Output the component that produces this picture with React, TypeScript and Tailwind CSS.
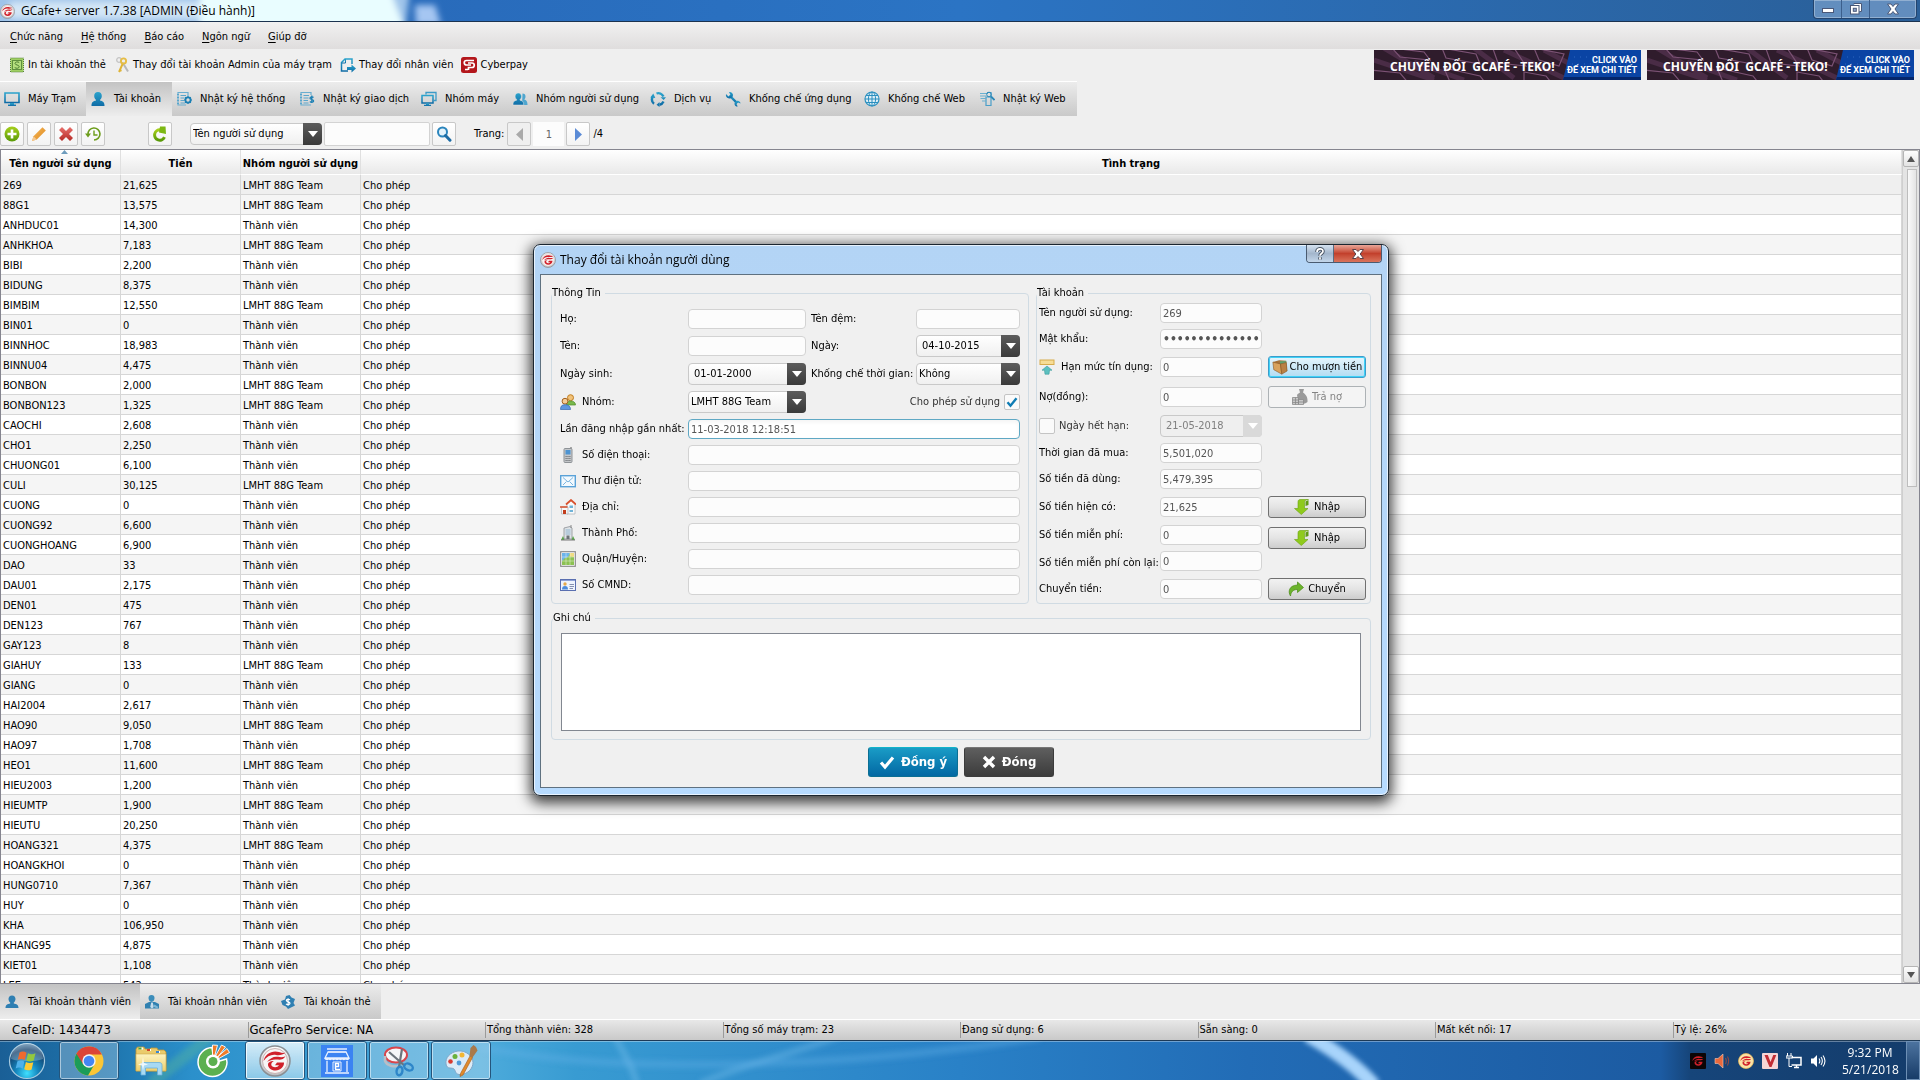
import React from "react";
import type { ReactNode } from "react";

type Row = [string, string, 0 | 1];

const rows: Row[] = [
  ["269", "21,625", 1],
  ["88G1", "13,575", 1],
  ["ANHDUC01", "14,300", 0],
  ["ANHKHOA", "7,183", 1],
  ["BIBI", "2,200", 0],
  ["BIDUNG", "8,375", 0],
  ["BIMBIM", "12,550", 1],
  ["BIN01", "0", 0],
  ["BINNHOC", "18,983", 0],
  ["BINNU04", "4,475", 0],
  ["BONBON", "2,000", 1],
  ["BONBON123", "1,325", 1],
  ["CAOCHI", "2,608", 0],
  ["CHO1", "2,250", 0],
  ["CHUONG01", "6,100", 0],
  ["CULI", "30,125", 1],
  ["CUONG", "0", 0],
  ["CUONG92", "6,600", 0],
  ["CUONGHOANG", "6,900", 0],
  ["DAO", "33", 0],
  ["DAU01", "2,175", 0],
  ["DEN01", "475", 0],
  ["DEN123", "767", 0],
  ["GAY123", "8", 0],
  ["GIAHUY", "133", 1],
  ["GIANG", "0", 0],
  ["HAI2004", "2,617", 0],
  ["HAO90", "9,050", 1],
  ["HAO97", "1,708", 0],
  ["HEO1", "11,600", 1],
  ["HIEU2003", "1,200", 0],
  ["HIEUMTP", "1,900", 1],
  ["HIEUTU", "20,250", 0],
  ["HOANG321", "4,375", 1],
  ["HOANGKHOI", "0", 0],
  ["HUNG0710", "7,367", 0],
  ["HUY", "0", 0],
  ["KHA", "106,950", 0],
  ["KHANG95", "4,875", 0],
  ["KIET01", "1,108", 0],
  ["LEE", "542", 0],
];

/* ---------- icons ---------- */

function Defs() {
  return (
    <svg width="0" height="0" className="absolute" aria-hidden="true">
      <defs>
        <linearGradient id="teal" x1="0" y1="0" x2="0" y2="1">
          <stop offset="0" stopColor="#2ba3cc" />
          <stop offset="1" stopColor="#0f6ca6" />
        </linearGradient>
        <linearGradient id="green" x1="0" y1="0" x2="0" y2="1">
          <stop offset="0" stopColor="#a6cf1c" />
          <stop offset="1" stopColor="#5a9a08" />
        </linearGradient>
        <linearGradient id="red" x1="0" y1="0" x2="0" y2="1">
          <stop offset="0" stopColor="#e8706c" />
          <stop offset="1" stopColor="#b52a26" />
        </linearGradient>
        <linearGradient id="orange" x1="0" y1="0" x2="1" y2="1">
          <stop offset="0" stopColor="#f5b65c" />
          <stop offset="1" stopColor="#de8a1c" />
        </linearGradient>
        <linearGradient id="paper" x1="0" y1="0" x2="0" y2="1">
          <stop offset="0" stopColor="#fdf3c0" />
          <stop offset="1" stopColor="#edcf6c" />
        </linearGradient>
        <linearGradient id="silver" x1="0" y1="0" x2="0" y2="1">
          <stop offset="0" stopColor="#ffffff" />
          <stop offset="1" stopColor="#b9bcc0" />
        </linearGradient>
        <radialGradient id="orb" cx="0.5" cy="0.85" r="0.9">
          <stop offset="0" stopColor="#3fe0ff" />
          <stop offset="0.35" stopColor="#1487bf" />
          <stop offset="0.75" stopColor="#123f6b" />
          <stop offset="1" stopColor="#6e9cc0" />
        </radialGradient>
      </defs>
    </svg>
  );
}

function Swirl({ color }: { color: string }) {
  return (
    <g fill={color}>
      <path d="M4.500 16C6 9 13 5 20 7c2 .6 4 1.200 6.500.8C24 10 20 10.500 17 10c-5-.8-9 1.500-12.500 6z" />
      <path d="M8 17c3-4 7-6 11-5.200 3 .6 5 .4 7.500-.5-1.500 3-5 3.700-8 3.300-4-.5-7.500.4-10.500 2.400z" />
      <path d="M9 19.500c0-2.200 3-3.700 6-3.500-3 1.300-3.500 4-1.500 5.500 2 1.400 5.500.8 6.500-1.200h-4l2-2.700h7c.3 4-3.500 8-8.500 8-4.500 0-7.500-3-7.500-6.100z" />
    </g>
  );
}

function GarenaLogo({ size, kind }: { size: number; kind: "ring" | "black" | "gold" }) {
  return (
    <svg width={size} height={size} viewBox="0 0 32 32" className="shrink-0">
      {kind === "black" ? (
        <rect width="32" height="32" rx="2" fill="#0c0506" />
      ) : (
        <circle
          cx="16"
          cy="16"
          r="15"
          fill={kind === "gold" ? "#fbe3a6" : "url(#silver)"}
          stroke={kind === "gold" ? "#e9b95a" : "#8b8e92"}
          strokeWidth="1.500"
        />
      )}
      {kind === "ring" && <circle cx="16" cy="16" r="12.500" fill="#f7f5f5" stroke="#c9b3b3" />}
      <Swirl color="#d0202a" />
    </svg>
  );
}

function Svg({ children, size = 16, box = 16 }: { children: ReactNode; size?: number; box?: number }) {
  return (
    <svg width={size} height={size} viewBox={`0 0 ${box} ${box}`} className="shrink-0" fill="none">
      {children}
    </svg>
  );
}

const T = "url(#teal)";

const MonitorIcon = () => (
  <Svg>
    <path d="M1 2h14v9.500H1z" stroke={T} strokeWidth="1.600" />
    <path d="M6 12h4v1.500h2V15H4v-1.500h2z" fill={T} />
  </Svg>
);
const PersonIcon = () => (
  <Svg>
    <path d="M8 1c2.400 0 3.800 1.700 3.800 3.900 0 1.700-.8 3.100-1.800 3.900v.8c2.600.6 4.500 1.400 4.500 5.400h-13c0-4 1.900-4.800 4.500-5.400v-.8C5 8 4.200 6.600 4.200 4.900 4.200 2.700 5.600 1 8 1z" fill={T} />
  </Svg>
);
const LogGearIcon = () => (
  <Svg>
    <path d="M12 5V1.500H2v12.500h8" stroke="#6aaed0" strokeWidth="1.200" />
    <path d="M1 3.500h2M1 6.500h2M1 9.500h2M1 12.500h2M4.500 4.500h5.500M4.500 7h4M4.500 9.500h3.500M4.500 12h4.500" stroke="#5aa6cc" />
    <circle cx="12" cy="9" r="2.600" stroke="#1a7fb4" strokeWidth="1.800" />
    <path d="M12 5v1.500M12 11.500V13M8 9h1.500M14.500 9H16M9.200 6.200l1 1M13.800 10.800l1 1M14.800 6.200l-1 1M10.200 10.800l-1 1" stroke="#1a7fb4" strokeWidth="1.200" />
  </Svg>
);
const LogMoneyIcon = () => (
  <Svg>
    <path d="M12 4V1.500H2v12.500h10" stroke="#6aaed0" strokeWidth="1.200" />
    <path d="M1 3.500h2M1 6.500h2M1 9.500h2M1 12.500h2M4.500 4.500h5.500M4.500 7h5M4.500 9.500h4.500M4.500 12h5" stroke="#5aa6cc" />
    <path d="M14.500 6.500c-1-1-3.500-.8-3.500.7 0 1.600 3.600 1 3.600 2.700 0 1.500-2.600 1.700-3.700.6M12.800 4.500v7.500" stroke="#1a7fb4" strokeWidth="1.300" />
  </Svg>
);
const ScreensIcon = () => (
  <Svg>
    <path d="M5 3.500V1.500h10v8h-2" stroke="#3c9bc8" strokeWidth="1.300" />
    <path d="M1 4.500h11v7.500H1z" stroke={T} strokeWidth="1.500" />
    <path d="M5 12.500h3v1.200h2V15H3v-1.300h2z" fill={T} />
  </Svg>
);
const PeopleIcon = () => (
  <Svg>
    <path d="M10.500 2.500c2 0 3 1.300 3 3 0 1.300-.5 2.300-1.300 3 2 .6 3.300 1.500 3.300 5.500H10z" fill="#4fa6cf" />
    <path d="M6.300 2c2 0 3.200 1.400 3.200 3.300 0 1.400-.7 2.600-1.500 3.200v.7c2.200.5 3.700 1.200 3.700 4.800H1c0-3.600 1.500-4.300 3.700-4.800v-.7C3.800 7.900 3.100 6.700 3.100 5.300 3.100 3.400 4.300 2 6.300 2z" fill={T} stroke="#e6e6e6" strokeWidth=".5" />
  </Svg>
);
const CycleIcon = () => (
  <Svg>
    <path d="M6.500 2.500C9 1.500 12 2.500 13.500 5.500M13.500 10.500c-.8 1.800-2.300 3-4 3.300M4 12.700C2 11.200 1.500 8.500 2.500 6" stroke={T} strokeWidth="2.400" />
    <path d="M10.500 6.300h5.500L13.700 9zM9.500 11v5l-3-2.300zM.3 6.500L3.300 2.500l2 4.400z" fill={T} />
  </Svg>
);
const WrenchIcon = () => (
  <Svg>
    <path d="M4.500 4.500l7.500 7.500" stroke={T} strokeWidth="2.400" />
    <path d="M1 3l2.500 2.500L5.500 4 4 1c2-.5 4 1 4 3 0 2.400-2.500 4-4.500 3.300C1.500 6.700.5 5 1 3z" fill={T} />
    <path d="M15.500 12.500L13 11.500l-1.500 1.500 1.200 2.600c-2 0-3.500-1.500-3.200-3.400.4-2 2.500-2.900 4-2.200 1.300.6 2 1.500 2 2.500z" fill={T} />
  </Svg>
);
const GlobeIcon = () => (
  <Svg>
    <circle cx="8" cy="8" r="7" stroke="#2a8fbf" strokeWidth="1.200" fill="#dff0f8" />
    <path d="M8 1v14M1 8h14M2 4.500h12M2 11.500h12" stroke="#2a8fbf" />
    <ellipse cx="8" cy="8" rx="3.600" ry="7" stroke="#2a8fbf" />
  </Svg>
);
const WebLogIcon = () => (
  <Svg>
    <path d="M1 2.500h8M1 5h6M1.500 7.500h5M3 10h3.500" stroke="#6ab0d0" strokeWidth="1.200" />
    <path d="M7 14.500V6h5v8.500zM8 1.500h4v4" stroke="#4a9ec8" strokeWidth="1.200" />
    <circle cx="10" cy="3.500" r="2.300" stroke="#2a88b8" />
    <path d="M12 5.500l3.500 3.500" stroke="#2a88b8" strokeWidth="1.800" />
  </Svg>
);

const PrintCardIcon = () => (
  <Svg>
    <rect x="1.500" y="1" width="13" height="14" fill="#9fcf63" stroke="#55803a" strokeDasharray="1 1" />
    <rect x="3.500" y="3.500" width="9" height="9" stroke="#5f8f40" fill="#b5df7f" />
    <path d="M10.200 5.500C9 4.500 6 4.700 6 6.500c0 1.700 4.200 1.200 4.200 3.200 0 1.800-3.200 2-4.500.8" stroke="#4a7a30" />
  </Svg>
);
const KeysIcon = () => (
  <Svg>
    <path d="M8.500 5.500L14 14.500" stroke="#b8b8b8" strokeWidth="2" />
    <path d="M9 6l-4 9M5.500 13l2 .8" stroke="#dfb436" strokeWidth="1.900" />
    <circle cx="5" cy="3" r="2.300" stroke="#c4c4c4" strokeWidth="1.300" />
    <circle cx="9.500" cy="4" r="2.600" stroke="#e6bd45" strokeWidth="1.900" />
  </Svg>
);
const SwitchUserIcon = () => (
  <Svg>
    <path d="M12 7V2H5L1.500 5.500V14H8" stroke={T} strokeWidth="1.500" />
    <path d="M5.500 2v4H1.500" stroke={T} />
    <path d="M7 10h4.500V7.500L16 11.500l-4.500 4V13H7z" fill={T} />
  </Svg>
);
const CyberpayIcon = () => (
  <Svg>
    <rect width="16" height="16" rx="2.500" fill="#b3161b" />
    <path d="M13 3.500H5.500a2 2 0 000 4.500h4.500M4 12.500h3M7 6h4a2.200 2.200 0 010 4.500H7.500V13" stroke="#fff" strokeWidth="1.700" />
  </Svg>
);

const AddIcon = () => (
  <Svg>
    <circle cx="8" cy="8" r="7.500" fill="url(#green)" />
    <path d="M8 3.500v9M3.500 8h9" stroke="#fff" strokeWidth="2.600" />
  </Svg>
);
const PencilIcon = () => (
  <Svg>
    <path d="M11.500 1.200l3.300 3.300-9 9-4.800 1.500 1.500-4.800z" fill="url(#orange)" />
    <path d="M1 15l1.500-4.800 3.300 3.300z" fill="#f3c892" />
  </Svg>
);
const DeleteIcon = () => (
  <Svg>
    <path d="M4 1l4 4 4-4 3 3-4 4 4 4-3 3-4-4-4 4-3-3 4-4-4-4z" fill="url(#red)" />
  </Svg>
);
const HistoryIcon = () => (
  <Svg>
    <path d="M3 8.500A6 6 0 119 14" stroke="#6d9d1c" strokeWidth="1.600" />
    <path d="M0 7.500h6l-3 4z" fill="#6d9d1c" />
    <path d="M9 4.500V9h3.500" stroke="#6d9d1c" strokeWidth="1.400" />
  </Svg>
);
const RefreshIcon = () => (
  <Svg>
    <path d="M12.500 11.200A5.200 5.200 0 118.500 3.800" stroke="url(#green)" strokeWidth="3" />
    <path d="M8 .5h5.500L14 8 7 6.500z" fill="#7db814" />
  </Svg>
);
const SearchIcon = () => (
  <Svg>
    <circle cx="6.500" cy="6" r="4.500" stroke="#2b85bd" strokeWidth="2" fill="#e4f3fb" />
    <path d="M9.500 9.500l4.500 4.700" stroke="#1d6ca5" strokeWidth="3" strokeLinecap="round" />
  </Svg>
);

const CardMemberIcon = () => (
  <Svg>
    <path d="M8 1.500c2.200 0 3.500 1.500 3.500 3.600 0 1.600-.8 2.800-1.700 3.500v.8c2.700.6 4.700 1.200 4.700 4.600H1.500c0-3.400 2-4 4.700-4.600v-.8C5.300 7.900 4.500 6.700 4.500 5.100 4.500 3 5.800 1.500 8 1.500z" fill="#2f7fb2" />
  </Svg>
);
const StaffIcon = () => (
  <Svg>
    <path d="M7.500 1c2 0 3 1.300 3 3S9.500 8 7.500 8s-3-2.300-3-4 1-3 3-3z" fill="#3c8dba" />
    <path d="M1 14.500V10l4-2h6l4 2v4.500z" fill="#3080b0" />
    <path d="M7.200 8.500h1.600l1 4.500-1.800 1.500L6.200 13z" fill="#c6dceb" />
    <path d="M10.500 10.500l4 2.500-1.500 1.500-4-2z" fill="#7db5d4" />
  </Svg>
);
const MoneyTagIcon = () => (
  <Svg>
    <path d="M9.500 1l2 2.500L15 5l-1.500 4L15 11.500 8 15l-2-2.500L2.500 11 1 7l4-1.500L6 2z" fill="#2f7fb2" />
    <path d="M10 5.800C9 5 6.300 5 6.300 6.600c0 1.600 3.700 1 3.700 2.700 0 1.600-2.900 1.700-4 .6M8.100 4.200v7.600" stroke="#fff" strokeWidth="1.200" />
  </Svg>
);

const GroupIcon = () => (
  <Svg>
    <circle cx="10.500" cy="3.700" r="3" fill="#f1c27a" stroke="#c07d20" />
    <path d="M6.500 11c0-3 1.500-4 4-4s5 1 5 4z" fill="#79b84c" stroke="#4f8c2c" strokeWidth=".7" />
    <circle cx="5" cy="7.200" r="2.900" fill="#f4cd97" stroke="#a5601c" />
    <path d="M.5 15.500c0-3.500 1.500-4.800 4.500-4.800s5.500 1.300 5.500 4.800z" fill="#5e97e0" stroke="#3567ad" strokeWidth=".7" />
  </Svg>
);
const PhoneIcon = () => (
  <Svg>
    <path d="M11 0v2" stroke="#777" strokeWidth="1.200" />
    <rect x="4" y="1.500" width="8" height="14" rx="1" fill="#c3c6c9" stroke="#8e9397" />
    <rect x="5.500" y="3" width="5" height="4.500" fill="#4d94d2" />
    <path d="M5.500 9.500h5M5.500 11.500h5M5.500 13.500h5" stroke="#6e7276" strokeDasharray="1.200 .7" />
  </Svg>
);
const MailIcon = () => (
  <Svg>
    <rect x=".7" y="2.700" width="14.600" height="11" fill="#f2f9fe" stroke="#5aa2d8" strokeWidth="1.400" />
    <path d="M3 4.500l5 4.500 5-4.500M3 12l3.500-3.500M13 12L9.500 8.500" stroke="#7cb5df" />
  </Svg>
);
const HouseIcon = () => (
  <Svg>
    <path d="M7 5l4-3.500L15 5v10H7z" fill="#fafafa" stroke="#a9b0b5" strokeWidth=".7" />
    <path d="M1.500 8H8v7H1.500z" fill="#f6f6f6" stroke="#a9b0b5" strokeWidth=".7" />
    <path d="M6 5.500L11 1l5 4.500M0 8h7.500" stroke="#d9502c" strokeWidth="1.700" />
    <rect x="3" y="11" width="3" height="4" fill="#c23d1c" />
    <path d="M9.500 6.500h3.500v2.500H9.500zM9.500 11h3.500v2H9.500z" fill="#6fb3d8" />
  </Svg>
);
const CityIcon = () => (
  <Svg>
    <path d="M4 14V3l6-1.500L12 3v11z" fill="#dfe3e6" stroke="#8c9196" strokeWidth=".8" />
    <path d="M11 0v3" stroke="#888" />
    <path d="M5.500 5h5M5.500 7h5M5.500 9h5" stroke="#8fb5d0" />
    <path d="M6.500 14v-3.500h3V14z" fill="#6d7378" />
    <path d="M1 15l2-4 1.500 4zM11.500 15l1.500-4 2 4z" fill="#5aa54a" />
    <path d="M1 15h14" stroke="#777" />
  </Svg>
);
const MapIcon = () => (
  <Svg>
    <rect x=".7" y=".7" width="14.600" height="14.600" fill="#fff" stroke="#8c8c8c" strokeWidth="1.200" />
    <rect x="2" y="2" width="12" height="12" fill="#8cc152" />
    <path d="M2 2h8l-2 4-3 1-3 3z" fill="#6cb4ea" />
    <path d="M10 2h4v4l-4-.5z" fill="#f0dc82" />
    <path d="M2 6h12M2 10h12M6 2v12M10 2v12" stroke="#fff" strokeWidth=".4" />
  </Svg>
);
const IdCardIcon = () => (
  <Svg>
    <rect x=".5" y="2.500" width="15" height="11" fill="#eef4fd" stroke="#5a6fb0" />
    <path d="M1 3.500h14" stroke="#8fa2d6" />
    <circle cx="5" cy="7" r="1.700" fill="#e4a94c" />
    <path d="M2 12.500c0-2.500 1-3.500 3-3.500s3 1 3 3.500z" fill="#4b8bdc" />
    <path d="M9.500 7.500H14M9.500 9.500H14M9.500 11.500H13" stroke="#8590b0" />
  </Svg>
);
const CreditIcon = () => (
  <Svg>
    <rect x="1" y="1" width="14" height="4.500" fill="#f7dd96" stroke="#d6ac4c" />
    <path d="M8 7l5 4.200h-2.500l-.5 4H6l-.5-4H3z" fill="#5cc0c0" stroke="#3a9c9c" strokeWidth=".6" />
  </Svg>
);
const WalletIcon = () => (
  <Svg box={18}>
    <path d="M1 3.500L8 1.500l8 .5 1 11-6 2.500z" fill="#a8743a" />
    <path d="M9 2.500h7v5H9z" fill="#5aa574" />
    <path d="M1 3.500l8.500 2 1.500 11.500-9-5z" fill="#d9a25c" stroke="#8a5a28" strokeWidth=".7" />
    <path d="M9.500 5.500L16 4l1 9.500-6 3.500z" fill="#b98145" stroke="#8a5a28" strokeWidth=".7" />
  </Svg>
);
const DebtIcon = () => (
  <Svg>
    <path d="M7 0h5l-1 3.500c3 2 5 5 4.500 9.500-2 2-6 2-9 1.500L5 6c1-1.500 2-2 3-2.500z" fill="#9a9a9a" />
    <path d="M.5 8.500h6v7h-6zM6.500 10.500h5v5h-5z" fill="#c9c9c9" stroke="#8a8a8a" strokeWidth=".8" />
    <path d="M.5 11h6M.5 13.500h6M6.500 13h5M3.500 8.500v7" stroke="#8a8a8a" strokeWidth=".8" />
  </Svg>
);
const DownArrowIcon = () => (
  <Svg>
    <path d="M14.500 1v5l-3 1V2.500z" fill="#5f9a12" />
    <path d="M4 3c0-2 1-2.500 3-2.500h7.500c-2.500.3-4 1-4 3v6H14L7.300 15.500.5 9.500H4z" fill="#8fca1c" stroke="#6aa30e" strokeWidth=".6" />
  </Svg>
);
const TransferIcon = () => (
  <Svg>
    <path d="M9.500 1L15.500 6.500l-6 5V8.500C5 8.500 3 11 2.500 15 0 11 .5 4.500 9.500 4z" fill="#6cb42c" stroke="#478a14" strokeWidth=".7" />
  </Svg>
);

/* ---------- controls ---------- */

function Caret({ className }: { className: string }) {
  return (
    <span className={`pointer-events-none absolute inset-y-0 right-0 flex w-[19px] items-center justify-center rounded-r-sm ${className}`}>
      <svg width="10" height="6" viewBox="0 0 10 6" fill="#fff">
        <path d="M0 0h10L5 6z" />
      </svg>
    </span>
  );
}

function Select({ id, label, value, indent, disabled }: { id: string; label?: string; value: string; indent?: boolean; disabled?: boolean }) {
  return (
    <span className="relative block h-[22px] w-full">
      <select
        id={id}
        aria-label={label}
        disabled={disabled}
        defaultValue={value}
        className={`block h-full w-full appearance-none rounded-sm border border-[#c9c9c9] pr-5 ${indent ? "pl-[5px]" : "pl-0.5"} ${disabled ? "bg-[#efefef] text-[#808080] opacity-100" : "bg-linear-to-b from-white to-[#f0f0f0] text-black"}`}
      >
        <option>{value}</option>
      </select>
      <Caret className={disabled ? "bg-[#d9d9d9]" : "bg-linear-to-b from-[#5c5c5c] to-[#3a3a3a]"} />
    </span>
  );
}

function Field({ id, value = "", focus, type = "text" }: { id: string; value?: string; focus?: boolean; type?: string }) {
  return (
    <input
      id={id}
      type={type}
      defaultValue={value}
      className={`block h-5 w-full min-w-0 rounded-sm border px-0.5 text-[#555] outline-none ${type === "password" ? "text-xs font-bold" : ""} ${focus ? "border-[#5fa8c4] bg-white inset-shadow-sm" : "border-[#d3d3d3] bg-[#fcfcfc]"}`}
    />
  );
}

function Label({ htmlFor, icon, children, className = "" }: { htmlFor: string; icon?: ReactNode; children: ReactNode; className?: string }) {
  return (
    <label htmlFor={htmlFor} className={`flex items-center gap-1.5 whitespace-nowrap ${className}`}>
      {icon}
      {children}
    </label>
  );
}

function Check({ id, checked, label }: { id: string; checked?: boolean; label?: string }) {
  return (
    <span className="relative block size-4">
      <input
        id={id}
        type="checkbox"
        aria-label={label}
        defaultChecked={checked}
        className="peer block size-4 appearance-none rounded-xs border border-[#c4c4c4] bg-[#fafafa]"
      />
      <svg className="pointer-events-none absolute inset-0 hidden peer-checked:block" width="16" height="16" viewBox="0 0 16 16" fill="none">
        <path d="M3.500 8.200l3 3.500 6-7.500" stroke="#0f7cb4" strokeWidth="2.400" />
      </svg>
    </span>
  );
}

function PushButton({ icon, children, kind = "plain" }: { icon: ReactNode; children: ReactNode; kind?: "plain" | "hot" | "off" }) {
  const look = {
    plain: "gap-1 border-[#707070] bg-linear-to-b from-[#f2f2f2] via-[#e4e4e4] to-[#cdcdcd]",
    hot: "gap-0.5 border-[#3c9ccb] bg-linear-to-b from-[#e6f5fc] to-[#b2dcf2] inset-ring-1 inset-ring-[#3fd2f7]",
    off: "gap-1 border-[#adb2b5] bg-[#f4f4f4] text-[#838383]",
  }[kind];
  return (
    <button type="button" disabled={kind === "off"} className={`flex h-[22px] w-full items-center justify-center rounded-[3px] border whitespace-nowrap ${look}`}>
      {icon}
      {children}
    </button>
  );
}

function Group({ title, className, legend = "-ml-2", children }: { title: string; className: string; legend?: string; children: ReactNode }) {
  return (
    <fieldset className={`min-w-0 rounded-[4px] border border-[#d0dbe3] ${className}`}>
      {children}
      <legend className={`pr-1 leading-3.5 ${legend}`}>{title}</legend>
    </fieldset>
  );
}

function IconButton({ label, className = "", children }: { label: string; className?: string; children: ReactNode }) {
  return (
    <button type="button" aria-label={label} className={`flex size-6 shrink-0 items-center justify-center rounded-xs border border-[#c8c8c8] bg-linear-to-b from-white to-[#f3f3f3] ${className}`}>
      {children}
    </button>
  );
}

/* ---------- main window ---------- */

function TitleBar() {
  return (
    <header className="relative flex h-[22px] shrink-0 items-start justify-between overflow-hidden border-b border-[#1b3350] bg-linear-to-r from-[#2764b4] via-[#2b74c4] to-[#2a5f98] font-['Open_Sans',sans-serif]">
      <svg className="absolute inset-0" width="460" height="21" viewBox="0 0 460 21" aria-hidden="true">
        <defs>
          <filter id="soft" x="-10%" y="-50%" width="120%" height="200%">
            <feGaussianBlur stdDeviation="3" />
          </filter>
        </defs>
        <g filter="url(#soft)">
          <path d="M-10-10h420l-5 40H-10z" fill="#9fc4ea" />
          <path d="M10 2h200v16H10z" fill="#d3e6f6" />
          <path d="M200-10h190l15 40H200z" fill="#e9fdff" />
          <path d="M415 5h20l6 20h-25z" fill="#a5c6f2" />
        </g>
      </svg>
      <h1 className="relative flex items-center gap-1.5 pt-0.5 text-xs leading-[18px]">
        <GarenaLogo size={15} kind="ring" />
        GCafe+ server 1.7.38 [ADMIN (Điều hành)]
      </h1>
      <div className="relative mr-[3px] flex h-[19px] rounded-b-[4px] border border-t-0 border-[#23446e] bg-[#7ba1cd]/70 inset-ring inset-ring-white/30">
        <button type="button" aria-label="Minimize" className="flex w-7 items-center justify-center border-r border-[#3c5f8c]">
          <Svg size={14} box={14}>
            <rect x="1.500" y="6.500" width="11" height="4" fill="#fff" stroke="#4a5878" />
          </Svg>
        </button>
        <button type="button" aria-label="Restore" className="flex w-7 items-center justify-center border-r border-[#3c5f8c]">
          <Svg size={14} box={14}>
            <path d="M4.500 1.500h8v8h-2" fill="#fff" stroke="#4a5878" />
            <rect x="1.500" y="3.500" width="8.500" height="8.500" fill="#fff" stroke="#4a5878" />
            <rect x="4.300" y="6.300" width="3" height="3" fill="#8fa6cc" stroke="#4a5878" />
          </Svg>
        </button>
        <button type="button" aria-label="Close" className="flex w-[46px] items-center justify-center">
          <Svg size={14} box={14}>
            <path d="M1.500 2h3.500l2 2.500L9 2h3.500L9 7l3.500 5H9L7 9.500 5 12H1.500L5 7z" fill="#fff" stroke="#4a5878" />
          </Svg>
        </button>
      </div>
    </header>
  );
}

function MenuBar() {
  const items = ["Chức năng", "Hệ thống", "Báo cáo", "Ngôn ngữ", "Giúp đỡ"];
  return (
    <nav className="flex h-[27px] shrink-0 items-center gap-[18px] bg-linear-to-b from-[#f1f1f1] to-[#dfdddd] px-2.5 pt-0.5">
      {items.map((t) => (
        <button type="button" key={t}>
          <span className="underline underline-offset-2">{t[0]}</span>
          {t.slice(1)}
        </button>
      ))}
    </nav>
  );
}

function Banner() {
  return (
    <a href="#teko" className="relative flex h-[30px] w-[267px] items-center justify-between overflow-hidden bg-[#2f1c2c] pr-1 pl-4 font-bold text-white">
      <svg className="absolute inset-0" width="267" height="30" viewBox="0 0 267 30" aria-hidden="true" fill="none">
        <g stroke="#4a2c46" strokeWidth="5">
          <path d="M0 10l60 20M40 12l50 18M100-2l40 30M10-2L60 28M130 0l60 28M170 0l30 16" />
        </g>
        <g stroke="#7b5274" strokeWidth="1.200">
          <path d="M18-2l32 4 6 8-30-3zM68-2l34 6 4 10-34-6zM118-4l22 2 12 18-28-3zM70 18l36 8 8 10-38-4zM-4 20l30 3 10 12-36-2zM150 22l22 4 8 10-30-4zM160-2l30 6-5 12-20-6z" />
        </g>
        <path d="M196 0h71v30h-78z" fill="#0a44a4" />
        <path d="M190 27h77v3h-78z" fill="#04266b" />
        <g stroke="#2d66c0" strokeDasharray="1 5">
          <path d="M200 7h64M198 14h66M195 21h70" />
        </g>
      </svg>
      <span className="relative pt-1 text-xs leading-4 whitespace-pre font-['Noto_Sans',sans-serif]">CHUYỂN ĐỔI  GCAFÉ - TEKO!</span>
      <span className="relative text-right text-[9px] leading-2.5 whitespace-nowrap font-['Roboto',sans-serif]">
        CLICK VÀO
        <br />
        ĐỂ XEM CHI TIẾT
      </span>
    </a>
  );
}

function ToolBar() {
  return (
    <div className="flex h-8 shrink-0 items-start justify-between pr-1.5 pl-[9px]">
      <div className="flex h-full items-center gap-2 whitespace-nowrap">
        <button type="button" className="flex items-center gap-[3px]"><PrintCardIcon />In tài khoản thẻ</button>
        <button type="button" className="flex items-center gap-[3px]"><KeysIcon />Thay đổi tài khoản Admin của máy trạm</button>
        <button type="button" className="flex items-center gap-[3px]"><SwitchUserIcon />Thay đổi nhân viên</button>
        <button type="button" className="flex items-center gap-[3px]"><CyberpayIcon />Cyberpay</button>
      </div>
      <div className="flex gap-1.5 pt-px">
        <Banner />
        <Banner />
      </div>
    </div>
  );
}

const tabs: [string, ReactNode, string][] = [
  ["Máy Trạm", <MonitorIcon />, "w-[86px]"],
  ["Tài khoản", <PersonIcon />, "w-[86px]"],
  ["Nhật ký hệ thống", <LogGearIcon />, "w-[123px]"],
  ["Nhật ký giao dịch", <LogMoneyIcon />, "w-[122px]"],
  ["Nhóm máy", <ScreensIcon />, "w-[91px]"],
  ["Nhóm người sử dụng", <PeopleIcon />, "w-[138px]"],
  ["Dịch vụ", <CycleIcon />, "w-[75px]"],
  ["Khống chế ứng dụng", <WrenchIcon />, "w-[139px]"],
  ["Khống chế Web", <GlobeIcon />, "w-[115px]"],
  ["Nhật ký Web", <WebLogIcon />, "w-[102px]"],
];

const tabIdle = "bg-linear-to-b from-[#ececec] to-[#c9c9c9]";
const tabOn = "bg-linear-to-b from-[#c3c3c3] to-[#ededed]";

function TabBar() {
  return (
    <nav className="flex h-[35px] shrink-0">
      {tabs.map(([t, icon, w], i) => (
        <button type="button" key={t} className={`flex items-center gap-2 border-t border-white pl-1 whitespace-nowrap ${w} ${i === 1 ? tabOn : tabIdle}`}>
          {icon}
          {t}
        </button>
      ))}
    </nav>
  );
}

function FilterBar() {
  return (
    <div className="flex h-[33px] shrink-0 items-center pt-[3px]">
      <div className="flex gap-[3px]">
        <IconButton label="Thêm"><AddIcon /></IconButton>
        <IconButton label="Sửa"><PencilIcon /></IconButton>
        <IconButton label="Xóa"><DeleteIcon /></IconButton>
        <IconButton label="Lịch sử"><HistoryIcon /></IconButton>
      </div>
      <IconButton label="Làm mới" className="ml-[43px]"><RefreshIcon /></IconButton>
      <div className="ml-[18px] w-[132px]">
        <Select id="filter-by" label="Lọc theo" value="Tên người sử dụng" />
      </div>
      <input aria-label="Tìm kiếm" className="ml-0.5 h-6 w-[106px] rounded-xs border border-[#d3d3d3] bg-[#fcfcfc] px-1" />
      <IconButton label="Tìm" className="ml-0.5"><SearchIcon /></IconButton>
      <label htmlFor="page" className="ml-[18px]">Trang:</label>
      <IconButton label="Trang trước" className="ml-[3px] bg-none">
        <svg width="7" height="13" viewBox="0 0 7 13" fill="#a9a9a9"><path d="M7 0v13L0 6.500z" /></svg>
      </IconButton>
      <input id="page" defaultValue="1" className="ml-0.5 h-6 w-[31px] bg-[#fcfcfc] text-center text-[#666]" />
      <IconButton label="Trang sau" className="ml-0.5">
        <svg width="7" height="13" viewBox="0 0 7 13" fill="#5b8bd6"><path d="M0 0v13L7 6.500z" /></svg>
      </IconButton>
      <span className="ml-[3px]">/4</span>
    </div>
  );
}

function ScrollBar() {
  return (
    <div className="flex w-[17px] shrink-0 flex-col border-l border-[#cfcfcf] bg-[#e4e4e4]">
      <button type="button" aria-label="Lên" className="flex h-[17px] items-center justify-center rounded-xs border border-[#b5b5b5] bg-linear-to-b from-[#fdfdfd] to-[#e3e3e3]">
        <svg width="8" height="6" viewBox="0 0 8 6" fill="#555"><path d="M4 0l4 6H0z" /></svg>
      </button>
      <div className="mt-0.5 mr-0.5 ml-1 h-[318px] border border-[#bdbdbd] bg-linear-to-r from-[#fafafa] to-[#e4e4e4]" />
      <div className="flex-1" />
      <button type="button" aria-label="Xuống" className="flex h-[17px] items-center justify-center rounded-xs border border-[#b5b5b5] bg-linear-to-b from-[#fdfdfd] to-[#e3e3e3]">
        <svg width="8" height="6" viewBox="0 0 8 6" fill="#555"><path d="M0 0h8L4 6z" /></svg>
      </button>
    </div>
  );
}

function AccountTable() {
  const th = "relative h-[25px] border-r border-b border-[#e0e0e0] border-b-white bg-linear-to-b from-white to-[#e9e9e9] px-0 pt-1 pb-0 text-center font-bold whitespace-nowrap";
  const td = "h-5 border-r border-b border-[#d6d6d6] px-0.5 pt-0.5 pb-0 whitespace-nowrap";
  return (
    <main className="flex min-h-0 flex-1 overflow-hidden border border-[#85858f] bg-white">
      <div className="min-w-0 flex-1 overflow-hidden">
        <table className="w-full table-fixed border-separate border-spacing-0 leading-3.5">
          <colgroup>
            <col className="w-[120px]" />
            <col className="w-[120px]" />
            <col className="w-[120px]" />
            <col />
          </colgroup>
          <thead>
            <tr>
              <th className={th}>
                <svg className="absolute top-0 left-1/2" width="7" height="4" viewBox="0 0 7 4" fill="#6f9dbd"><path d="M3.500 0L7 4H0z" /></svg>
                Tên người sử dụng
              </th>
              <th className={th}>Tiền</th>
              <th className={th}>Nhóm người sử dụng</th>
              <th className={th}>Tình trạng</th>
            </tr>
          </thead>
          <tbody>
            {rows.map(([name, money, g], i) => (
              <tr key={name} className={i === 0 ? "bg-[#efefef]" : i % 2 ? "bg-[#f5f5f5]" : "bg-white"}>
                <td className={td}>{name}</td>
                <td className={td}>{money}</td>
                <td className={td}>{g ? "LMHT 88G Team" : "Thành viên"}</td>
                <td className={td}>Cho phép</td>
              </tr>
            ))}
          </tbody>
        </table>
      </div>
      <ScrollBar />
    </main>
  );
}

function BottomTabs() {
  return (
    <nav className="flex h-[35px] shrink-0">
      <button type="button" className={`flex w-[140px] items-center gap-2 pl-1 whitespace-nowrap ${tabOn}`}><CardMemberIcon />Tài khoản thành viên</button>
      <button type="button" className={`flex w-[136px] items-center gap-2 pl-1 whitespace-nowrap ${tabIdle}`}><StaffIcon />Tài khoản nhân viên</button>
      <button type="button" className={`flex w-[105px] items-center gap-2 pl-1 whitespace-nowrap ${tabIdle}`}><MoneyTagIcon />Tài khoản thẻ</button>
    </nav>
  );
}

function StatusBar() {
  const cells = ["CafeID: 1434473", "GcafePro Service: NA", "Tổng thành viên: 328", "Tổng số máy trạm: 23", "Đang sử dụng: 6", "Sẵn sàng: 0", "Mất kết nối: 17", "Tỷ lệ: 26%"];
  return (
    <footer className="grid h-[21px] shrink-0 grid-cols-8 items-center border-t border-white bg-linear-to-b from-[#e8e8e8] to-[#c9c9c9] pr-2.5 pl-2.5">
      {cells.map((c, i) => (
        <span key={c} className={`h-4 leading-4 whitespace-nowrap ${i ? "border-l border-[#9a9a9a] pl-px" : "pl-0.5"} ${i < 2 ? "text-[13px]" : ""}`}>{c}</span>
      ))}
    </footer>
  );
}

/* ---------- taskbar ---------- */

function StartOrb() {
  return (
    <svg width="38" height="38" viewBox="0 0 38 38">
      <circle cx="19" cy="19" r="17.500" fill="url(#orb)" stroke="#a8cbe0" strokeWidth="1.200" />
      <path d="M3 17a16 16 0 0132 0c-8 3-24 3-32 0z" fill="#fff" opacity=".25" />
      <path d="M11.500 10.500c2.500-1.500 5-1 7 .2l-1.700 7.300c-2-1.200-4.500-1.500-7-.3z" fill="#ee6a2f" />
      <path d="M20 11.300c2.500 1.300 5 1.200 7.500 0l-1.800 7.300c-2.500 1.200-5 1.200-7.400-.2z" fill="#93c83e" />
      <path d="M9.400 19.200c2.500-1.200 5-.9 7 .3l-1.700 7.200c-2-1.300-4.500-1.500-7-.3z" fill="#4db1ea" />
      <path d="M17.900 20c2.500 1.400 5 1.300 7.400.2l-1.700 7.200c-2.500 1.200-5 1.100-7.400-.2z" fill="#fccb33" />
    </svg>
  );
}

function ChromeIcon() {
  return (
    <svg width="32" height="32" viewBox="0 0 32 32">
      <circle cx="16" cy="16" r="14.500" fill="#fbc636" />
      <path d="M3.400 8.800A14.500 14.500 0 0015 30.500l6.500-11.200L16 16z" fill="#1b9c58" />
      <path d="M3.400 8.800L10 19l6-9.500h12.900A14.500 14.500 0 003.400 8.800z" fill="#dc4437" />
      <circle cx="16" cy="16" r="6.700" fill="#f3f3f3" />
      <circle cx="16" cy="16" r="5.300" fill="#4486f4" />
    </svg>
  );
}

function ExplorerIcon() {
  return (
    <svg width="34" height="32" viewBox="0 0 34 32">
      <path d="M2 26V4l1.500-2H10l1 2h5l1-1h6l1 2h6l2 2v19z" fill="#eacb6c" stroke="#bc9635" strokeWidth=".8" />
      <path d="M5 2.500h4v2H5zM13 4h4v2h-4zM22 6h4v2h-4z" fill="#fff" />
      <path d="M4.500 2.500h3v2h-3z" fill="#44a63c" />
      <path d="M13 4h3v2h-3z" fill="#d2442d" />
      <path d="M22 6h3v2h-3z" fill="#3b87d2" />
      <path d="M2 9h30v17H2z" fill="url(#paper)" stroke="#cda84a" strokeWidth=".6" />
      <path d="M7 30V20.500c0-2 1-3 3-3h15c2 0 3 1 3 3V30h-4.500v-7h-12v7z" fill="#a7d9f3" stroke="#6ab0da" strokeWidth=".8" />
      <path d="M9 12l1 6 4 1.500-4 1-1 5-1-5-4-1 4-1.500z" fill="#fff" opacity=".8" />
    </svg>
  );
}

function CocCocIcon() {
  return (
    <svg width="34" height="34" viewBox="0 0 34 34">
      <path d="M16 3.500A14.500 14.500 0 1031 18.500L30.500 15 20 18l-2.500-4z" fill="#5bb04f" stroke="#fff" strokeWidth="1.500" />
      <path d="M16.500 1l5 .3-3 11.500-2-.5zM31 4.500l2.500 4L22 15l-1-1.500zM25.500 1l4 2-8.500 11-2-1.200z" fill="#ef7a28" stroke="#fff" strokeWidth=".9" />
      <circle cx="17" cy="17.500" r="7" fill="#fff" />
      <circle cx="17" cy="17.500" r="4.500" fill="#5bb04f" />
    </svg>
  );
}

function StoreIcon() {
  return (
    <svg width="32" height="32" viewBox="0 0 32 32" fill="none">
      <rect width="32" height="32" fill="#3b83f2" />
      <path d="M6 4h20M7 7l-3 6h24l-3-6zM4 13c0 2 3.400 2 3.400 0 0 2 3.500 2 3.500 0 0 2 3.400 2 3.400 0 0 2 3.500 2 3.500 0 0 2 3.400 2 3.400 0 0 2 3.400 2 3.400 0 0 2 3.400 2 3.400 0M6 16v11M26 16v11M4 28h24" stroke="#e8f1ff" strokeWidth="1.300" />
      <path d="M7 6h18v2H7z" fill="#cfe0fc" />
      <path d="M12 17h8v9h-8z" stroke="#e8f1ff" />
      <path d="M14.500 24v-5.500h3v3h-3M14 24.500h5" stroke="#fff" strokeWidth="1.500" />
    </svg>
  );
}

function SnipIcon() {
  return (
    <svg width="32" height="32" viewBox="0 0 32 32" fill="none">
      <ellipse cx="13" cy="10" rx="11" ry="7.500" fill="#f6f6f8" stroke="#d8454b" strokeWidth="2" />
      <path d="M2 11v5c2 5 9 6 14 5" stroke="#b9bec6" strokeWidth="2.500" />
      <path d="M6 7l16 14M19 4l-3 18" stroke="#6d747c" strokeWidth="2.200" />
      <ellipse cx="25.500" cy="22" rx="4.500" ry="3.200" stroke="#2e86c9" strokeWidth="2.400" transform="rotate(25 25.500 22)" />
      <ellipse cx="16.500" cy="26" rx="2.900" ry="4.300" stroke="#2e86c9" strokeWidth="2.400" transform="rotate(10 16.500 26)" />
    </svg>
  );
}

function PaintIcon() {
  return (
    <svg width="34" height="32" viewBox="0 0 34 32">
      <path d="M14 6C6 7 1 13 2 19c1 6 6 3 8 5s1 6 7 5.500c7-.6 12-6 12-12S22 5 14 6z" fill="#dcebf7" stroke="#7ea6c8" />
      <circle cx="6.500" cy="16.500" r="2.300" fill="#d83a30" />
      <circle cx="11" cy="11.500" r="2.500" fill="#6ab23c" />
      <circle cx="18" cy="10" r="2.500" fill="#f2b632" />
      <circle cx="15" cy="18" r="2.400" fill="#4f9ad8" />
      <path d="M26 11l2.500 1.500L19 30l-3 1.500.5-3z" fill="#e08a2c" stroke="#a85c18" strokeWidth=".6" />
      <path d="M25.500 11l1-8 3-3 2.500 2 1.500 3.500-5 7z" fill="#a9794a" />
    </svg>
  );
}

function TaskButton({ label, active, open, children }: { label: string; active?: boolean; open?: boolean; children: ReactNode }) {
  const look = active
    ? "border-[#24557c] bg-linear-to-b from-[#e8f6fd]/90 to-[#9fd4ee]/80 inset-ring inset-ring-white/80"
    : open
      ? "border-[#24557c] bg-white/25 inset-ring inset-ring-white/50"
      : "border-transparent";
  return (
    <button type="button" aria-label={label} className={`flex h-[39px] w-[60px] items-center justify-center rounded-[3px] border ${look}`}>
      {children}
    </button>
  );
}

function Taskbar() {
  return (
    <footer className="relative flex h-10 shrink-0 items-center overflow-hidden border-t border-[#1d3a57] bg-[#2981c7] text-white">
      <svg className="absolute inset-0 h-full w-full" viewBox="0 0 1920 40" preserveAspectRatio="none" aria-hidden="true">
        <defs>
          <linearGradient id="bar" x1="0" x2="1" y1="0" y2="0">
            <stop offset="0" stopColor="#1a5f96" />
            <stop offset=".06" stopColor="#1f77b0" />
            <stop offset=".1" stopColor="#2b90cb" />
            <stop offset=".25" stopColor="#4dabdb" />
            <stop offset=".3" stopColor="#389bd2" />
            <stop offset=".5" stopColor="#2981c7" />
            <stop offset=".65" stopColor="#226cb6" />
            <stop offset=".865" stopColor="#1c5ba2" />
            <stop offset=".88" stopColor="#16457a" />
            <stop offset="1" stopColor="#143c6b" />
          </linearGradient>
          <filter id="glow" x="-20%" width="140%">
            <feGaussianBlur stdDeviation="2.500" />
          </filter>
        </defs>
        <rect width="1920" height="40" fill="url(#bar)" />
        <g filter="url(#glow)" fill="none">
          <path d="M615-4c6 12 16 26 22 48M700 44c40-20 100-32 140-50" stroke="#7cc3ee" strokeWidth="7" opacity=".35" />
          <path d="M480 6c140 30 380 20 560-10" stroke="#63b2e8" strokeWidth="8" opacity=".35" />
          <path d="M1308-6c24 14 48 30 66 52" stroke="#a8d4fb" strokeWidth="15" />
          <path d="M150 44l60-48" stroke="#58b89b" strokeWidth="12" opacity=".4" />
        </g>
        <path d="M0 .5h1920" stroke="#fff" opacity=".35" />
      </svg>
      <button type="button" aria-label="Start" className="relative mr-[13px] ml-2"><StartOrb /></button>
      <div className="relative flex gap-0.5">
        <TaskButton label="Chrome" open><ChromeIcon /></TaskButton>
        <TaskButton label="Explorer"><ExplorerIcon /></TaskButton>
        <TaskButton label="Cốc Cốc"><CocCocIcon /></TaskButton>
        <TaskButton label="GCafe+" active><GarenaLogo size={32} kind="ring" /></TaskButton>
        <TaskButton label="Store" open><StoreIcon /></TaskButton>
        <TaskButton label="Snipping Tool" open><SnipIcon /></TaskButton>
        <TaskButton label="Paint" open><PaintIcon /></TaskButton>
      </div>
      <div className="relative ml-auto flex items-center gap-2">
        <GarenaLogo size={16} kind="black" />
        <Svg>
          <path d="M1 5.500h3L9 1v14l-5-4.500H1z" fill="#e9693d" stroke="#f7c9b4" strokeWidth=".6" />
          <path d="M11.500 5c1 2 1 4 0 6M13.500 3.500c1.500 3 1.500 6 0 9" stroke="#8a4a48" strokeWidth="1.100" />
        </Svg>
        <GarenaLogo size={16} kind="gold" />
        <Svg>
          <rect width="16" height="16" rx="1" fill="#f6d5d5" />
          <path d="M2.500 2h3.300L8.500 9l2.800-7h3L9.500 14h-2z" fill="#c22c34" />
        </Svg>
        <Svg>
          <path d="M5.500 4.500H15v7.500H5.500M8 14.500h5M10.500 12v2.500" stroke="#fff" strokeWidth="1.500" />
          <path d="M1.500 0v3M5 0v3M0 3h6.500v2H0zM3 5v8.500h3" stroke="#fff" />
        </Svg>
        <Svg>
          <path d="M1 5.500h2.500L7 2v12l-3.500-3.500H1z" fill="#fff" />
          <path d="M9 5.500c1 1.500 1 3.500 0 5M11 4c1.700 2.500 1.700 5.500 0 8M13 2.500c2.500 3.500 2.500 7.500 0 11" stroke="#fff" strokeWidth="1.100" />
        </Svg>
        <time className="ml-2 w-14 text-center text-xs leading-[17px] font-['Open_Sans',sans-serif]">
          9:32 PM
          <br />
          5/21/2018
        </time>
        <button type="button" aria-label="Show desktop" className="h-[39px] w-3.5 border border-[#6d8fb5] bg-linear-to-b from-[#4c739f] to-[#173c68]" />
      </div>
    </footer>
  );
}

/* ---------- dialog ---------- */

function InfoGroup() {
  const wide: [string, string, ReactNode][] = [
    ["phone", "Số điện thoại:", <PhoneIcon />],
    ["mail", "Thư điện tử:", <MailIcon />],
    ["address", "Địa chỉ:", <HouseIcon />],
    ["city", "Thành Phố:", <CityIcon />],
    ["district", "Quận/Huyện:", <MapIcon />],
    ["idcard", "Số CMND:", <IdCardIcon />],
  ];
  return (
    <Group title="Thông Tin" className="w-[478px] px-2 pt-[9px] pb-2">
      <div className="grid grid-cols-[128px_118px_1fr_104px] items-center gap-y-1.5">
        <Label htmlFor="ho">Họ:</Label>
        <Field id="ho" />
        <Label htmlFor="dem" className="pl-[5px]">Tên đệm:</Label>
        <Field id="dem" />

        <Label htmlFor="ten">Tên:</Label>
        <Field id="ten" />
        <Label htmlFor="ngay" className="pl-[5px]">Ngày:</Label>
        <Select id="ngay" value="04-10-2015" indent />

        <Label htmlFor="sinh">Ngày sinh:</Label>
        <Select id="sinh" value="01-01-2000" indent />
        <Label htmlFor="gio" className="pl-[5px]">Khống chế thời gian:</Label>
        <Select id="gio" value="Không" />

        <Label htmlFor="nhom" icon={<GroupIcon />}>Nhóm:</Label>
        <Select id="nhom" value="LMHT 88G Team" />
        <div className="col-span-2 flex items-center justify-end gap-1 text-[#333]">
          <label htmlFor="allow">Cho phép sử dụng</label>
          <Check id="allow" checked />
        </div>

        <Label htmlFor="last">Lần đăng nhập gần nhất:</Label>
        <div className="col-span-3"><Field id="last" value="11-03-2018 12:18:51" focus /></div>

        {wide.map(([id, text, icon]) => (
          <React.Fragment key={id}>
            <Label htmlFor={id} icon={icon}>{text}</Label>
            <div className="col-span-3"><Field id={id} /></div>
          </React.Fragment>
        ))}
      </div>
    </Group>
  );
}

const accountCols = "grid grid-cols-[121px_102px_1fr]";

function AccountRow({ id, text, icon, tall, field, action }: { id: string; text: string; icon?: ReactNode; tall?: boolean; field: ReactNode; action?: ReactNode }) {
  return (
    <div className={`${accountCols} items-center ${tall ? "h-6" : "h-5"}`}>
      <Label htmlFor={id} icon={icon}>{text}</Label>
      {field}
      <div className="pl-1.5">{action}</div>
    </div>
  );
}

function AccountGroup() {
  return (
    <Group title="Tài khoản" className="flex-1 pt-[3px] pr-1 pb-px pl-0.5" legend="-ml-0.5">
      <div className="flex flex-col gap-1.5">
        <AccountRow id="user" text="Tên người sử dụng:" field={<Field id="user" value="269" />} />
        <AccountRow id="pass" text="Mật khẩu:" field={<Field id="pass" type="password" value="00000000000000" />} />
        <AccountRow id="limit" text="Hạn mức tín dụng:" icon={<CreditIcon />} tall field={<Field id="limit" value="0" />} action={<PushButton kind="hot" icon={<WalletIcon />}>Cho mượn tiền</PushButton>} />
        <AccountRow id="debt" text="Nợ(đồng):" tall field={<Field id="debt" value="0" />} action={<PushButton kind="off" icon={<DebtIcon />}>Trả nợ</PushButton>} />
        <div className={`${accountCols} items-center`}>
          <div className="flex items-center gap-1 text-[#333]">
            <Check id="expire" />
            <label htmlFor="expire">Ngày hết hạn:</label>
          </div>
          <Select id="expire-date" label="Ngày hết hạn" value="21-05-2018" indent disabled />
        </div>
        <AccountRow id="bought" text="Thời gian đã mua:" field={<Field id="bought" value="5,501,020" />} />
        <AccountRow id="used" text="Số tiền đã dùng:" field={<Field id="used" value="5,479,395" />} />
        <AccountRow id="have" text="Số tiền hiện có:" tall field={<Field id="have" value="21,625" />} action={<PushButton icon={<DownArrowIcon />}>Nhập</PushButton>} />
        <div className={`${accountCols} items-start gap-y-1.5`}>
          <Label htmlFor="free" className="h-5">Số tiền miễn phí:</Label>
          <Field id="free" value="0" />
          <div className="h-5 pt-0.5 pl-1.5"><PushButton icon={<DownArrowIcon />}>Nhập</PushButton></div>
          <Label htmlFor="freeleft" className="h-5 pt-1">Số tiền miễn phí còn lại:</Label>
          <Field id="freeleft" value="0" />
        </div>
        <AccountRow id="move" text="Chuyển tiền:" tall field={<Field id="move" value="0" />} action={<PushButton icon={<TransferIcon />}>Chuyển</PushButton>} />
      </div>
    </Group>
  );
}

function AccountDialog() {
  return (
    <div className="pointer-events-none absolute inset-x-0 top-0 bottom-10 flex items-center justify-center pl-0.5">
      <section
        role="dialog"
        aria-labelledby="dialog-title"
        className="pointer-events-auto w-[856px] rounded-[7px] border border-[#1c2630] bg-linear-to-b from-[#b3d4f5] to-[#b7dbff] px-1.5 pb-[7px] shadow-[0_4px_14px_3px_rgba(0,0,0,0.75)] inset-ring inset-ring-white/70"
      >
        <header className="flex h-[29px] items-start justify-between font-['Open_Sans',sans-serif]">
          <h2 id="dialog-title" className="flex h-full items-center gap-1 text-xs">
            <GarenaLogo size={16} kind="ring" />
            Thay đổi tài khoản người dùng
          </h2>
          <div className="flex h-[18px] overflow-hidden rounded-b-[4px] border border-t-0 border-[#4a5b70]">
            <button type="button" aria-label="Help" className="flex w-[27px] items-center justify-center border-r border-[#5a6b80] bg-linear-to-b from-[#d5e2f0] via-[#a3b6cc] to-[#c3d6ea]">
              <Svg size={14} box={14}>
                <path d="M4 5c0-4 6-4 6-.8C10 6.500 7 6.500 7 8.800M7 10.300v2.200" stroke="#4a5564" strokeWidth="3.600" />
                <path d="M4 5c0-4 6-4 6-.8C10 6.500 7 6.500 7 8.800M7 10.300v2.200" stroke="#fff" strokeWidth="1.700" />
              </Svg>
            </button>
            <button type="button" aria-label="Close" className="flex w-[47px] items-center justify-center bg-linear-to-b from-[#e8a598] via-[#c2402c] to-[#d9735c]">
              <Svg size={14} box={14}>
                <path d="M1.500 2.500h3.500l2 2 2-2h3.500L9.200 7l3.300 4.500H9l-2-2-2 2H1.500L4.800 7z" fill="#fff" stroke="#5a4048" />
              </Svg>
            </button>
          </div>
        </header>
        <div className="border border-[#5f7180] bg-[#f0f0f0] px-2.5 pt-[11px] pb-2.5">
          <div className="flex gap-[7px]">
            <InfoGroup />
            <AccountGroup />
          </div>
          <div className="mt-[7px]">
            <Group title="Ghi chú" className="px-[9px] pt-2 pb-2">
              <textarea aria-label="Ghi chú" className="block h-[98px] w-full resize-none border border-[#828790] bg-white p-1" />
            </Group>
          </div>
          <div className="mt-[7px] flex justify-center gap-1.5 text-[13px] font-bold text-white">
            <button type="button" className="flex h-[30px] w-[90px] items-center justify-center gap-1.5 rounded-[3px] border border-[#0b6f93] border-t-[#12b3c9] bg-linear-to-b from-[#1a9cc6] to-[#0468a3]">
              <Svg>
                <path d="M2 8.500l4 4.500L14 3.500" stroke="#fff" strokeWidth="3.200" />
              </Svg>
              Đồng ý
            </button>
            <button type="button" className="flex h-[30px] w-[90px] items-center justify-center gap-1.5 rounded-[3px] border border-[#3c3c3c] border-t-[#777] bg-linear-to-b from-[#5f5f5f] to-[#3c3c3c]">
              <Svg size={14} box={14}>
                <path d="M2 2l10 10M12 2L2 12" stroke="#fff" strokeWidth="3.400" />
              </Svg>
              Đóng
            </button>
          </div>
        </div>
      </section>
    </div>
  );
}

export default function App() {
  return (
    <div className="relative flex h-screen flex-col overflow-hidden bg-[#efefef] font-['DejaVu_Sans_Condensed','DejaVu_Sans',sans-serif] text-[11px] leading-4 text-black">
      <Defs />
      <TitleBar />
      <MenuBar />
      <ToolBar />
      <TabBar />
      <FilterBar />
      <AccountTable />
      <BottomTabs />
      <StatusBar />
      <Taskbar />
      <AccountDialog />
    </div>
  );
}
